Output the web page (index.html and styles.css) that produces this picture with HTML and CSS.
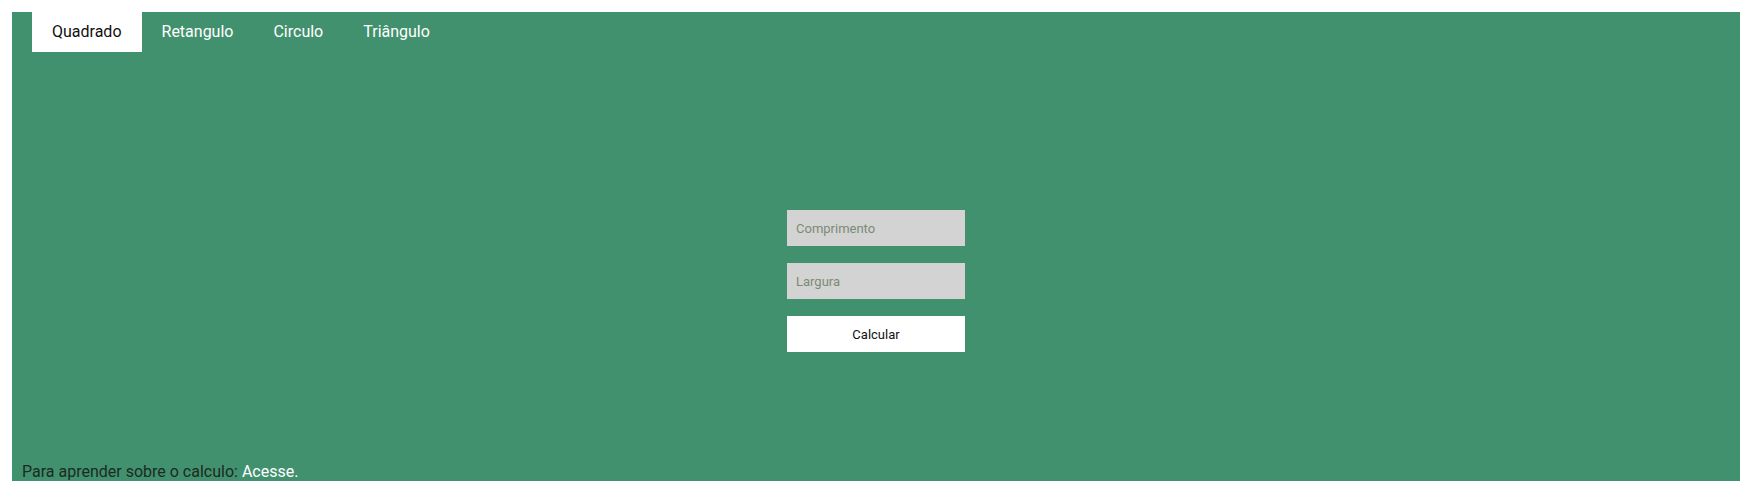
FILE: index.html
```html
<!DOCTYPE html>
<html lang="pt">
<head>
<meta charset="utf-8">
<title>Calculadora de área</title>
<link rel="stylesheet" href="styles.css">
</head>
<body>
<div class="app">
  <nav class="tabs">
    <a class="tab active" href="#">Quadrado</a>
    <a class="tab" href="#">Retangulo</a>
    <a class="tab" href="#">Circulo</a>
    <a class="tab" href="#">Triângulo</a>
  </nav>
  <main class="main">
    <form class="form">
      <input class="field" type="text" placeholder="Comprimento">
      <input class="field" type="text" placeholder="Largura">
      <button class="btn" type="button">Calcular</button>
    </form>
  </main>
  <footer class="footer">Para aprender sobre o calculo: <a class="link" href="#">Acesse.</a></footer>
</div>
</body>
</html>
```
FILE: styles.css
```css
html, body { height: 100%; }
body {
  margin: 12px 11px 13px 12px;
  font-family: Roboto, "Liberation Sans", sans-serif;
  background: #fff;
}
.app {
  height: calc(100vh - 25px);
  background: #42916e;
  display: flex;
  flex-direction: column;
}
.tabs {
  display: flex;
  padding-left: 20px;
  height: 40px;
}
.tab {
  display: flex;
  align-items: center;
  padding: 0 20px 2px;
  color: #fff;
  text-decoration: none;
  font-size: 16px;
}
.tab.active {
  background: #fff;
  color: #111;
}
.main {
  flex: 1;
  display: flex;
  justify-content: center;
  padding-top: 158px;
}
.form {
  display: flex;
  flex-direction: column;
  gap: 17px;
  width: 178px;
}
.field {
  box-sizing: border-box;
  height: 36px;
  border: none;
  background: #d3d3d3;
  padding: 0 9px;
  font-family: Roboto, "Liberation Sans", sans-serif;
  font-size: 13px;
  outline: none;
}
.field::placeholder { color: #7a8c74; }
.btn {
  height: 36px;
  border: none;
  background: #fff;
  color: #111;
  font-family: Roboto, "Liberation Sans", sans-serif;
  font-size: 13px;
}
.footer {
  padding-left: 10px;
  font-size: 16px;
  line-height: 19px;
  color: #1c2a22;
}
.link {
  color: #fff;
  text-decoration: none;
}
```
